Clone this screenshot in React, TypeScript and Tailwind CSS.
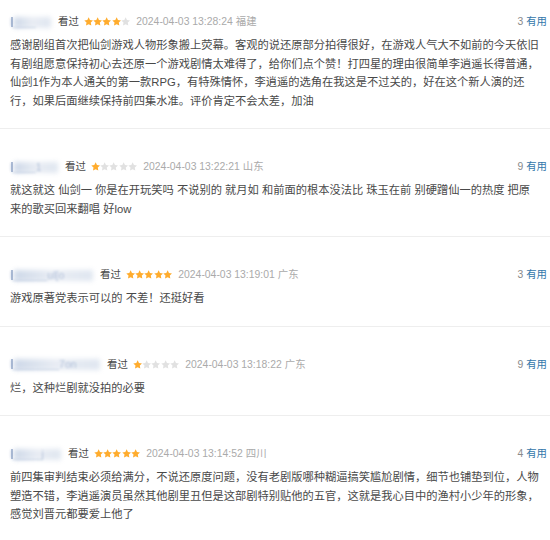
import React from "react";

type Review = {
  nameWidth: number;
  nameHint: string;
  rating: number;
  time: string;
  place: string;
  useful: number;
  text: string;
};

const reviews: Review[] = [
  {
    nameWidth: 43,
    nameHint: "l____",
    rating: 4,
    time: "2024-04-03 13:28:24",
    place: "福建",
    useful: 3,
    text: "感谢剧组首次把仙剑游戏人物形象搬上荧幕。客观的说还原部分拍得很好，在游戏人气大不如前的今天依旧有剧组愿意保持初心去还原一个游戏剧情太难得了，给你们点个赞！打四星的理由很简单李逍遥长得普通，仙剑1作为本人通关的第一款RPG，有特殊情怀，李逍遥的选角在我这是不过关的，好在这个新人演的还行，如果后面继续保持前四集水准。评价肯定不会太差，加油",
  },
  {
    nameWidth: 50,
    nameHint: "l____1",
    rating: 1,
    time: "2024-04-03 13:22:21",
    place: "山东",
    useful: 9,
    text: "就这就这 仙剑一 你是在开玩笑吗 不说别的 就月如 和前面的根本没法比 珠玉在前 别硬蹭仙一的热度 把原来的歌买回来翻唱 好low",
  },
  {
    nameWidth: 85,
    nameHint: "l______ul[o",
    rating: 5,
    time: "2024-04-03 13:19:01",
    place: "广东",
    useful: 3,
    text: "游戏原著党表示可以的 不差！还挺好看",
  },
  {
    nameWidth: 92,
    nameHint: "l________7on",
    rating: 1,
    time: "2024-04-03 13:18:22",
    place: "广东",
    useful: 9,
    text: "烂，这种烂剧就没拍的必要",
  },
  {
    nameWidth: 53,
    nameHint: "l_____j",
    rating: 5,
    time: "2024-04-03 13:14:52",
    place: "四川",
    useful: 4,
    text: "前四集审判结束必须给满分，不说还原度问题，没有老剧版哪种糊逼搞笑尴尬剧情，细节也铺垫到位，人物塑造不错，李逍遥演员虽然其他剧里丑但是这部剧特别贴他的五官，这就是我心目中的渔村小少年的形象，感觉刘晋元都要爱上他了",
  },
];

function Star({ on }: { on: boolean }) {
  return (
    <svg width="9.3" height="9" viewBox="0 0 24 23" className="block">
      <path
        d="M12 0.8l3.4 7.1 7.8 1-5.7 5.4 1.4 7.7L12 18.3 5.1 22l1.4-7.7L0.8 8.9l7.8-1z"
        fill={on ? "#ffac2d" : "#e1e1e1"}
      />
    </svg>
  );
}

function Stars({ n }: { n: number }) {
  return (
    <span className="flex items-center">
      {[0, 1, 2, 3, 4].map((i) => (
        <Star key={i} on={i < n} />
      ))}
    </span>
  );
}

function BlurName({ width, hint }: { width: number; hint: string }) {
  // username is mosaicked in the screenshot
  return (
    <span className="relative block h-[14px]" style={{ width }}>
      <span className="absolute left-[4px] right-[2px] top-[2px] h-[11px] bg-gradient-to-r from-[#cdd8e8] via-[#e9edf4] to-[#dfe6f0] blur-[2.5px]" />
      <span className="absolute inset-0 overflow-hidden whitespace-nowrap text-[10.5px] leading-[14px] text-[#6f8cba] opacity-45 blur-[1.3px]">
        {hint}
      </span>
      <span className="absolute left-[1px] top-[2px] h-[10px] w-[2px] bg-[#7d95bd] opacity-60 blur-[0.5px]" />
    </span>
  );
}

function ReviewItem({ r, first }: { r: Review; first: boolean }) {
  return (
    <div
      className={`border-b border-[#eeeeee] pb-[18px] pl-[10px] ${
        first ? "pt-[13px]" : "pt-[29px]"
      }`}
    >
      <div className="flex h-[18px] items-center justify-between pr-[3px] text-[10.4px]">
        <div className="flex items-center">
          <BlurName width={r.nameWidth} hint={r.nameHint} />
          <span className="ml-[5px] text-[#494949]">看过</span>
          <span className="ml-[5px]">
            <Stars n={r.rating} />
          </span>
          <span className="ml-[6px] text-[#aaaaaa]">{r.time}</span>
          <span className="ml-[3px] text-[#aaaaaa]">{r.place}</span>
        </div>
        <div>
          <span className="text-[#8a8a8a]">{r.useful}</span>
          <span className="ml-[3px] text-[#3377aa]">有用</span>
        </div>
      </div>
      <p className="mt-[5px] pr-[10px] text-[11.25px] leading-[18.5px] text-[#494949]">
        {r.text}
      </p>
    </div>
  );
}

export default function App() {
  return (
    <div className="h-[540px] w-[550px] overflow-hidden bg-white font-['Liberation_Sans','Noto_Sans_CJK_SC',sans-serif]">
      {reviews.map((r, i) => (
        <ReviewItem key={i} r={r} first={i === 0} />
      ))}
    </div>
  );
}
